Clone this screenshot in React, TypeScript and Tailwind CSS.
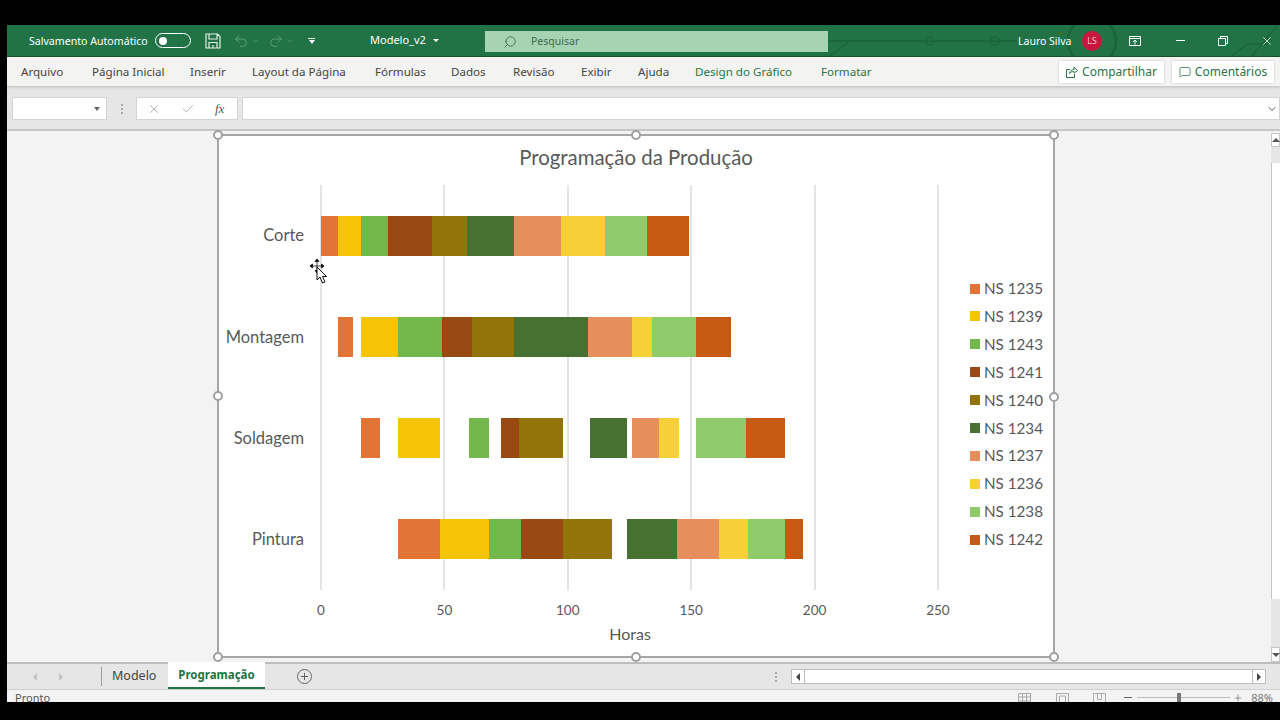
import { Check, ChevronDown, MessageSquare, Plus, Redo2, Search, Undo2, X } from "lucide-react"

const SCALE = 2.47

const legend = [
  { name: "NS 1235", color: "#e27535" },
  { name: "NS 1239", color: "#f6c407" },
  { name: "NS 1243", color: "#72b84a" },
  { name: "NS 1241", color: "#984a12" },
  { name: "NS 1240", color: "#937408" },
  { name: "NS 1234", color: "#477130" },
  { name: "NS 1237", color: "#e78f5c" },
  { name: "NS 1236", color: "#f7cf36" },
  { name: "NS 1238", color: "#8fcb6b" },
  { name: "NS 1242", color: "#c75a12" },
]

// from / to in hours, one pair per order, same order as the legend
const rows = [
  { label: "Corte", spans: [[0, 7], [7, 16], [16, 27], [27, 45], [45, 59], [59, 78], [78, 97], [97, 115], [115, 132], [132, 149]] },
  { label: "Montagem", spans: [[7, 13], [16, 31], [31, 49], [49, 61], [61, 78], [78, 108], [108, 126], [126, 134], [134, 152], [152, 166]] },
  { label: "Soldagem", spans: [[16, 24], [31, 48], [60, 68], [73, 80], [80, 98], [109, 124], [126, 137], [137, 145], [152, 172], [172, 188]] },
  { label: "Pintura", spans: [[31, 48], [48, 68], [68, 81], [81, 98], [98, 118], [124, 144], [144, 161], [161, 173], [173, 188], [188, 195]] },
]

const axis = ["0", "50", "100", "150", "200", "250"]

const tabs = [
  { name: "Arquivo", w: "w-[43px]" },
  { name: "Página Inicial", w: "w-[70px]" },
  { name: "Inserir", w: "w-[34px]" },
  { name: "Layout da Página", w: "w-[95px]" },
  { name: "Fórmulas", w: "w-[48px]" },
  { name: "Dados", w: "w-[34px]" },
  { name: "Revisão", w: "w-[40px]" },
  { name: "Exibir", w: "w-[29px]" },
  { name: "Ajuda", w: "w-[29px]" },
]

function Handle({ className }: { className: string }) {
  return <div className={`absolute size-[10px] rounded-full border-2 border-[#a0a0a0] bg-white ${className}`} />
}

function Bars({ spans }: { spans: number[][] }) {
  return (
    <div className="relative z-10 flex h-10">
      {spans.map(([from, to], i) => (
        <div
          key={i}
          style={{
            marginLeft: (from - (i ? spans[i - 1][1] : 0)) * SCALE,
            width: (to - from) * SCALE,
            background: legend[i].color,
          }}
        />
      ))}
    </div>
  )
}

function MoveCursor() {
  return (
    <svg className="absolute left-[90px] top-[122px] z-20" width="20" height="28" viewBox="0 0 20 28">
      <path d="M8 1v14M1 8h14M8 1l-2 2.5h4zM8 15l-2-2.5h4zM1 8l2.5-2v4zM15 8l-2.5-2v4z" stroke="#111" strokeWidth="0.8" fill="#111" />
      <path d="M8 9v13l3-3 2.500 6 2.500-1-2.500-5.500h4z" fill="#fff" stroke="#111" strokeWidth="1" />
    </svg>
  )
}

function Chart() {
  return (
    <div className="relative h-[524px] w-[838px] border-2 border-[#a6a6a6] bg-white font-['Lato',sans-serif] text-[#595959]">
      <div className="flex h-[41px] items-center justify-center pt-[2px] text-[20.4px]">Programação da Produção</div>
      <div className="mt-2 flex h-[405px]">
        <div className="flex w-[85px] flex-col text-[16.5px]">
          {rows.map((r) => (
            <div key={r.label} className="flex flex-1 items-center justify-end">
              {r.label}
            </div>
          ))}
        </div>
        <div className="relative ml-[17px] w-[649px]">
          <div className="absolute inset-y-0 -left-px flex w-[619px] justify-between">
            {axis.map((a) => (
              <div key={a} className="w-[2px] bg-[#e4e4e4]" />
            ))}
          </div>
          <div className="flex h-full flex-col">
            {rows.map((r) => (
              <div key={r.label} className="flex flex-1 items-center">
                <Bars spans={r.spans} />
              </div>
            ))}
          </div>
        </div>
        <div className="flex flex-col gap-[7.9px] pt-[93.5px] text-[15.2px]">
          {legend.map((l) => (
            <div key={l.name} className="flex h-5 items-center gap-1">
              <div className="size-[10px]" style={{ background: l.color }} />
              {l.name}
            </div>
          ))}
        </div>
      </div>
      <div className="ml-[101px] mt-[10px] flex h-5 w-[619px] items-center justify-between text-[13.5px]">
        {axis.map((a) => (
          <div key={a} className="flex w-[2px] justify-center">
            {a}
          </div>
        ))}
      </div>
      <div className="mt-1 flex h-5 items-center justify-center pr-3 text-[16px]">Horas</div>

      <Handle className="-left-[6px] -top-[6px]" />
      <Handle className="-top-[6px] left-[412px]" />
      <Handle className="-right-[6px] -top-[6px]" />
      <Handle className="-left-[6px] top-[255px]" />
      <Handle className="-right-[6px] top-[256px]" />
      <Handle className="-bottom-[6px] -left-[6px]" />
      <Handle className="-bottom-[6px] left-[412px]" />
      <Handle className="-bottom-[6px] -right-[6px]" />
      <MoveCursor />
    </div>
  )
}

function TitleBar() {
  return (
    <div className="relative flex h-8 items-center overflow-hidden border-b border-[#14552f] bg-[#217346] text-[11px] text-white">
      <svg className="absolute left-0 top-0" width="1273" height="32" fill="none" stroke="#1b6639" strokeWidth="1.5">
        <path d="M820 16h190M823 31l20-15M1225 31l15-12h20M1245 31l25-30" />
        <circle cx="923" cy="16" r="4" />
        <circle cx="988" cy="16" r="4" />
        <circle cx="1085" cy="16" r="24" strokeWidth="3" />
      </svg>
      <div className="relative ml-[22px] mt-[2px] w-[126px] whitespace-nowrap text-[10.6px]">Salvamento Automático</div>
      <div className="relative flex h-[15px] w-9 items-center rounded-full border-[1.5px] border-white pl-[3px]">
        <div className="size-[8px] rounded-full bg-white" />
      </div>
      <svg className="relative ml-[14px]" width="16" height="16" viewBox="0 0 16 16" fill="none" stroke="#dff0e5" strokeWidth="1.2">
        <path d="M1 1h11.500L15 3.500V15H1zM4 1v5h8V1M4 15v-5.500h8V15M8 12v3" />
      </svg>
      <Undo2 className="relative ml-[12px] size-4 text-[#5c9f78]" strokeWidth={1.5} />
      <ChevronDown className="relative ml-[2px] size-2 text-[#5c9f78]" />
      <Redo2 className="relative ml-[9px] size-4 text-[#5c9f78]" strokeWidth={1.5} />
      <ChevronDown className="relative ml-[2px] size-2 text-[#5c9f78]" />
      <div className="relative ml-[14px] flex w-[7px] flex-col items-center gap-[1px]">
        <div className="h-px w-[7px] bg-white" />
        <div className="size-0 border-x-[3.5px] border-t-[4px] border-x-transparent border-t-white" />
      </div>
      <div className="relative ml-[55px] w-[55px] whitespace-nowrap">Modelo_v2</div>
      <div className="relative ml-[8px] size-0 border-x-[3px] border-t-[3px] border-x-transparent border-t-white" />
      <div className="relative ml-[46px] mt-[2px] flex h-[21px] w-[343px] items-center bg-[#a6d3b2] pl-[18px] text-[#3f6b50]">
        <Search className="size-[14px] -scale-x-100" strokeWidth={1.5} />
        <span className="ml-[14px] text-[10.5px]">Pesquisar</span>
      </div>
      <div className="relative ml-[190px] mt-[2px] w-[53px] whitespace-nowrap text-[10.5px]">Lauro Silva</div>
      <div className="relative ml-[11px] flex size-[20px] items-center justify-center rounded-full bg-[#c8173f] text-[9px] text-[#f3c0cc]">
        LS
      </div>
      <svg className="relative ml-[27px]" width="12" height="10" viewBox="0 0 12 10" fill="none" stroke="#fff">
        <path d="M.5.500h11v9H.5zM.5 2.500h11M6 8.500V4.500M4 6l2-2 2 2" />
      </svg>
      <div className="relative ml-[35px] h-px w-[9px] bg-white" />
      <svg className="relative ml-[33px]" width="10" height="10" viewBox="0 0 10 10" fill="none" stroke="#fff">
        <path d="M.5 2.500h7v7h-7zM2.500 2.500v-2h7v7h-2" />
      </svg>
      <X className="relative ml-[32px] size-[14px]" strokeWidth={1.2} />
    </div>
  )
}

function RibbonTabs() {
  return (
    <div className="relative z-10 flex h-[29px] items-center gap-[28px] bg-[#f3f3f2] pl-[14px] text-[11.6px] text-[#444] shadow-[0_1px_3px_rgba(0,0,0,0.2)]">
      {tabs.map((t) => (
        <div key={t.name} className={`${t.w} mt-[1px] whitespace-nowrap`}>
          {t.name}
        </div>
      ))}
      <div className="mt-[1px] w-[98px] whitespace-nowrap text-[#2a7349]">Design do Gráfico</div>
      <div className="mt-[1px] w-[50px] whitespace-nowrap text-[#2a7349]">Formatar</div>
      <div className="ml-auto mr-[6px] mt-[1px] flex gap-2 text-[12px]">
        <div className="flex h-[22px] w-[105px] items-center justify-center gap-1 bg-white text-[#2a7349] shadow-[0_0_2px_rgba(0,0,0,0.2)]">
          <svg width="12" height="12" viewBox="0 0 12 12" fill="none" stroke="#2a7349">
            <path d="M4 3.500H.5v8h8V8M3.500 7.500C4 4.500 6 3.500 8 3.500V1l3.500 3.500L8 7V5.500c-2 0-3.500.500-4.500 2z" />
          </svg>
          Compartilhar
        </div>
        <div className="flex h-[22px] w-[102px] items-center justify-center gap-1 bg-white text-[#2a7349] shadow-[0_0_2px_rgba(0,0,0,0.2)]">
          <MessageSquare className="size-3" strokeWidth={1.5} />
          Comentários
        </div>
      </div>
    </div>
  )
}

function FormulaBar() {
  return (
    <div className="flex h-[45px] items-start border-b-2 border-[#c6c6c6] bg-[#e6e6e6] pl-[5px] pt-[11px]">
      <div className="flex h-[23px] w-[95px] items-center justify-end border border-[#d4d4d4] bg-white pr-[6px]">
        <div className="size-0 border-x-[3.5px] border-t-[4px] border-x-transparent border-t-[#666]" />
      </div>
      <div className="flex h-[23px] w-[29px] flex-col items-center justify-center gap-[2px]">
        <div className="size-[2px] bg-[#aaa]" />
        <div className="size-[2px] bg-[#aaa]" />
        <div className="size-[2px] bg-[#aaa]" />
      </div>
      <div className="flex h-[23px] w-[102px] items-center gap-[20px] border border-[#d4d4d4] bg-white pl-[10px] text-[#a8a8a8]">
        <X className="size-[14px]" strokeWidth={1.5} />
        <Check className="size-[14px]" strokeWidth={1.5} />
        <span className="font-['Liberation_Serif',serif] text-[13px] italic text-[#555]">fx</span>
      </div>
      <div className="ml-1 flex h-[23px] flex-1 items-center justify-end border border-[#d4d4d4] bg-white pr-[1px]">
        <ChevronDown className="size-3 text-[#555]" />
      </div>
    </div>
  )
}

function VScroll() {
  return (
    <div className="flex h-full w-[9px] flex-col pt-[2px]">
      <div className="flex h-[14px] items-center justify-center border border-[#c6c6c6] bg-white">
        <div className="size-0 border-x-[4px] border-b-[4px] border-x-transparent border-b-[#555]" />
      </div>
      <div className="h-4 bg-[#e6e6e6]" />
      <div className="h-[436px] border-l border-[#c6c6c6] bg-white" />
      <div className="flex-1 bg-[#e6e6e6]" />
      <div className="flex h-[15px] items-center justify-center border border-[#c6c6c6] bg-white">
        <div className="size-0 border-x-[4px] border-t-[4px] border-x-transparent border-t-[#555]" />
      </div>
    </div>
  )
}

function SheetTabs() {
  return (
    <div className="flex h-[27px] items-center border-t-2 border-[#bdbdbd] bg-[#e6e6e6] text-[12.5px] text-[#444]">
      <div className="ml-[26px] size-0 border-y-[4px] border-r-[4px] border-y-transparent border-r-[#c4c4c4]" />
      <div className="ml-[22px] size-0 border-y-[4px] border-l-[4px] border-y-transparent border-l-[#c4c4c4]" />
      <div className="ml-[38px] h-[19px] w-px bg-[#9c9c9c]" />
      <div className="ml-[10px] w-[44px]">Modelo</div>
      <div className="-mt-[2px] ml-[12px] flex h-[27px] w-[97px] items-center justify-center border-b-2 border-[#217346] bg-white text-[11.5px] font-bold text-[#217346]">
        Programação
      </div>
      <div className="ml-[32px] flex size-[15px] items-center justify-center rounded-full border border-[#666]">
        <Plus className="size-[11px] text-[#555]" strokeWidth={2} />
      </div>
      <div className="ml-[463px] flex flex-col gap-[2px]">
        <div className="size-[2px] bg-[#aaa]" />
        <div className="size-[2px] bg-[#aaa]" />
        <div className="size-[2px] bg-[#aaa]" />
      </div>
      <div className="ml-[14px] flex h-[15px] w-[475px] items-center border border-[#bdbdbd] bg-white">
        <div className="flex h-full w-[13px] items-center justify-center border-r border-[#bdbdbd]">
          <div className="size-0 border-y-[4px] border-r-[4px] border-y-transparent border-r-[#444]" />
        </div>
        <div className="ml-auto flex h-full w-[13px] items-center justify-center border-l border-[#bdbdbd]">
          <div className="size-0 border-y-[4px] border-l-[4px] border-y-transparent border-l-[#444]" />
        </div>
      </div>
    </div>
  )
}

function StatusBar() {
  return (
    <div className="flex h-[13px] overflow-hidden border-t border-[#d0d0d0] bg-[#f3f3f3] text-[11px] leading-[14px] text-[#555]">
      <div className="ml-2 mt-[1px]">Pronto</div>
      <div className="ml-auto flex items-start pt-[3px] text-[#999]">
        <svg width="13" height="12" viewBox="0 0 13 12" fill="none" stroke="#aaa">
          <path d="M.5.500h12v11H.5zM.5 4h12M.5 8h12M4.500.500v11M8.500.500v11" />
        </svg>
        <svg className="ml-[25px]" width="13" height="12" viewBox="0 0 13 12" fill="none" stroke="#aaa">
          <path d="M.5.500h12v11H.5zM3.500 3h6v8h-6z" />
        </svg>
        <svg className="ml-[24px]" width="13" height="12" viewBox="0 0 13 12" fill="none" stroke="#aaa">
          <path d="M.5.500h12v11H.5zM4.500.500v6h4v-6" />
        </svg>
        <div className="ml-[18px] mt-[4px] h-px w-2 bg-[#666]" />
        <div className="relative ml-[5px] mt-[4px] h-px w-[93px] bg-[#bbb]">
          <div className="absolute -top-[4px] left-[40px] h-[12px] w-[4px] bg-[#777]" />
        </div>
        <Plus className="ml-[3px] size-[10px] text-[#666]" strokeWidth={1.5} />
        <div className="ml-[8px] mr-[7px] -mt-[2px] text-[#777]">88%</div>
      </div>
    </div>
  )
}

export default function App() {
  return (
    <div className="flex h-[720px] w-[1280px] overflow-hidden bg-black pb-[18px] pl-[7px] pt-[25px] font-['Noto_Sans',sans-serif]">
      <div className="flex flex-1 flex-col">
        <TitleBar />
        <RibbonTabs />
        <FormulaBar />
        <div className="flex h-[531px] bg-[#f3f3f3]">
          <div className="flex-1 pl-[210px] pt-[3px]">
            <Chart />
          </div>
          <VScroll />
        </div>
        <SheetTabs />
        <StatusBar />
      </div>
    </div>
  )
}
